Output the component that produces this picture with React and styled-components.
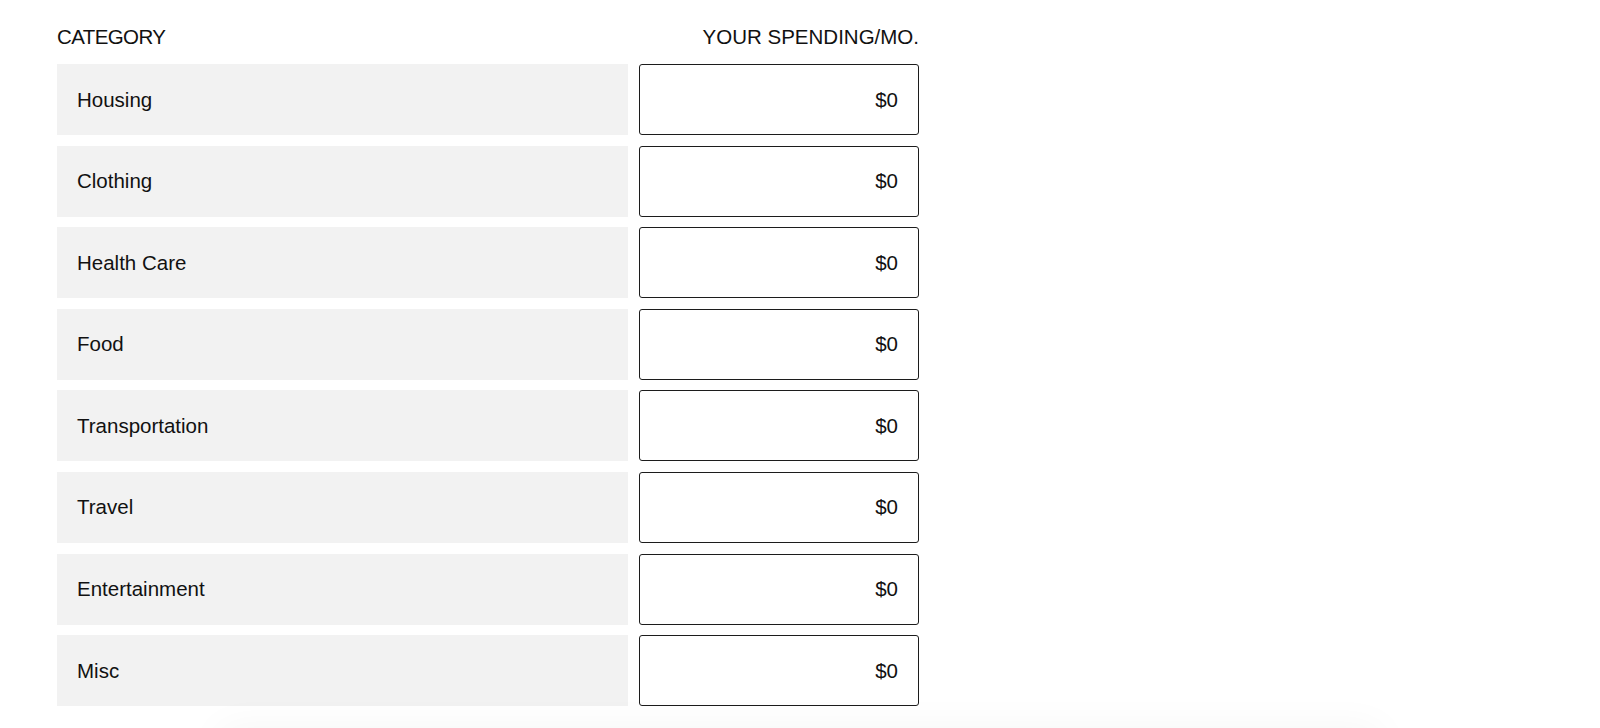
import React from "react";
import styled, { createGlobalStyle } from "styled-components";

const GlobalStyle = createGlobalStyle`
  html, body {
    margin: 0;
    background: #fff;
    font-family: "Liberation Sans", Arial, sans-serif;
    color: #111;
  }
`;

const Page = styled.div`
  padding: 25px 0 0 57px;
  width: 862px;
`;

const HeaderRow = styled.div`
  display: grid;
  grid-template-columns: 571px 280px;
  column-gap: 11px;
  height: 24px;
  line-height: 24px;
  margin-bottom: 15px;
  font-size: 20.5px;
`;

const HeaderCell = styled.div`
  text-align: ${(p) => (p.$right ? "right" : "left")};
  letter-spacing: ${(p) => (p.$right ? "0" : "-0.6px")};
`;

const List = styled.div`
  display: flex;
  flex-direction: column;
  gap: 10.6px;
`;

const Row = styled.div`
  display: grid;
  grid-template-columns: 571px 280px;
  column-gap: 11px;
  height: 71px;
`;

const Category = styled.div`
  background: #f2f2f2;
  display: flex;
  align-items: center;
  padding-left: 20px;
  font-size: 20.5px;
`;

const AmountInput = styled.input`
  box-sizing: border-box;
  width: 100%;
  height: 71px;
  border: 1px solid #1c1c1c;
  border-radius: 3px;
  padding: 0 20px;
  text-align: right;
  font-family: inherit;
  font-size: 20.5px;
  color: #111;
  background: #fff;
  outline: none;
`;

const FooterShadow = styled.div`
  position: fixed;
  left: 220px;
  right: 220px;
  bottom: -60px;
  height: 60px;
  background: #fff;
  box-shadow: 0 0 40px rgba(0, 0, 0, 0.045);
`;

const categories = [
  "Housing",
  "Clothing",
  "Health Care",
  "Food",
  "Transportation",
  "Travel",
  "Entertainment",
  "Misc",
];

export default function App() {
  return (
    <>
      <GlobalStyle />
      <Page>
        <HeaderRow>
          <HeaderCell>CATEGORY</HeaderCell>
          <HeaderCell $right>YOUR SPENDING/MO.</HeaderCell>
        </HeaderRow>
        <List>
          {categories.map((name) => (
            <Row key={name}>
              <Category>{name}</Category>
              <AmountInput type="text" defaultValue="$0" aria-label={name} />
            </Row>
          ))}
        </List>
      </Page>
      <FooterShadow />
    </>
  );
}
